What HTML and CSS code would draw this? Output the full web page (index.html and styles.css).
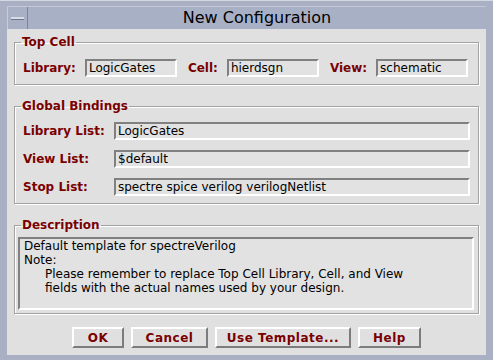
FILE: index.html
```html
<!DOCTYPE html>
<html lang="en">
<head>
  <meta charset="UTF-8">
  <title>New Configuration</title>
  <link rel="stylesheet" href="styles.css">
</head>
<body>
  <div class="window">
    <!-- Title bar -->
    <div class="titlebar">
      <div class="menu-btn"><span class="dash"></span></div>
      <div class="title">New Configuration</div>
    </div>

    <div class="content">
      <!-- Top Cell -->
      <fieldset class="group">
        <legend>Top Cell</legend>
        <div class="cell-row">
          <label class="lbl">Library:</label>
          <div class="field short">LogicGates</div>
          <label class="lbl">Cell:</label>
          <div class="field short">hierdsgn</div>
          <label class="lbl">View:</label>
          <div class="field short last">schematic</div>
        </div>
      </fieldset>

      <!-- Global Bindings -->
      <fieldset class="group">
        <legend>Global Bindings</legend>
        <div class="bind-grid">
          <label class="lbl">Library List:</label>
          <div class="field">LogicGates</div>
          <label class="lbl">View List:</label>
          <div class="field">$default</div>
          <label class="lbl">Stop List:</label>
          <div class="field">spectre spice verilog verilogNetlist</div>
        </div>
      </fieldset>

      <!-- Description -->
      <fieldset class="group desc-group">
        <legend>Description</legend>
        <div class="desc">
          <div>Default template for spectreVerilog</div>
          <div>Note:</div>
          <div class="indent">Please remember to replace Top Cell Library, Cell, and View</div>
          <div class="indent">fields with the actual names used by your design.</div>
        </div>
      </fieldset>

      <div class="buttons">
        <button class="btn btn-ok">OK</button>
        <button class="btn btn-cancel">Cancel</button>
        <button class="btn btn-template">Use Template...</button>
        <button class="btn btn-help">Help</button>
      </div>
    </div>
  </div>
</body>
</html>
```

FILE: styles.css
```css
html, body {
  margin: 0;
  padding: 0;
}
body {
  width: 493px;
  height: 360px;
  background: #a9b0c4;
  font-family: 'DejaVu Sans', sans-serif;
  overflow: hidden;
}
.window {
  box-sizing: border-box;
  height: 360px;
  padding: 5px 7px 5px 7px;
  border-top: 1px solid #d4d8e2;
  display: flex;
  flex-direction: column;
}
.titlebar {
  height: 23px;
  display: flex;
  background: #a8b0c6;
  border-top: 1px solid #c4c9d6;
  box-sizing: border-box;
}
.menu-btn {
  width: 21px;
  box-sizing: border-box;
  border-right: 1px solid #7f8699;
  border-left: 1px solid #c8ccd8;
  display: flex;
  align-items: center;
  justify-content: center;
}
.dash {
  display: block;
  width: 13px;
  height: 2px;
  background: #d8dce6;
  border-bottom: 1px solid #6f7689;
}
.title {
  flex: 1;
  text-align: center;
  font-size: 16px;
  line-height: 22px;
  color: #000;
}
.content {
  flex: 1;
  background: #e0e0e0;
  padding: 6px 7px 0 7px;
  display: flex;
  flex-direction: column;
}
.group {
  margin: 0;
  padding: 0 8px 7px 8px;
  border: 1px solid #a2a2a2;
  box-shadow: inset 1px 1px 0 #fff, 1px 1px 0 #fff;
}
.group + .group {
  margin-top: 14px;
}
legend {
  padding: 0 1px;
  margin-left: -2px;
  font-size: 12px;
  font-weight: bold;
  line-height: 14px;
  color: #7a0000;
}
.lbl {
  font-size: 12px;
  font-weight: bold;
  color: #7a0000;
  white-space: nowrap;
}
.field {
  box-sizing: border-box;
  height: 18px;
  background: #e2e2e2;
  border-top: 2px solid #808080;
  border-left: 2px solid #808080;
  border-bottom: 2px solid #fff;
  border-right: 2px solid #fff;
  padding: 0 2px;
  font-size: 12px;
  line-height: 14px;
  color: #000;
  white-space: nowrap;
  overflow: hidden;
}
.cell-row {
  display: flex;
  align-items: center;
  padding-top: 10px;
}
.cell-row .lbl {
  margin-right: 9px;
}
.field.short {
  width: 92px;
  margin-right: 11px;
}
.field.short.last {
  margin-right: 0;
}
.bind-grid {
  display: grid;
  grid-template-columns: 91px 1fr;
  row-gap: 10px;
  align-items: center;
  padding-top: 9px;
}
.desc-group {
  padding: 5px 4px 3px 3px;
}
.desc-group legend {
  margin-left: 3px;
}
.desc {
  box-sizing: border-box;
  height: 73px;
  background: #e2e2e2;
  border-top: 2px solid #808080;
  border-left: 2px solid #808080;
  border-bottom: 2px solid #fff;
  border-right: 2px solid #fff;
  padding: 0 4px;
  font-size: 12px;
  line-height: 14px;
  color: #000;
}
.indent {
  padding-left: 21px;
}
.buttons {
  display: flex;
  justify-content: center;
  gap: 7px;
  margin-top: 13px;
}
.btn {
  box-sizing: border-box;
  height: 21px;
  background: #e0e0e0;
  border-top: 2px solid #fff;
  border-left: 2px solid #fff;
  border-bottom: 2px solid #7c7c7c;
  border-right: 2px solid #7c7c7c;
  padding: 0;
  font-family: 'DejaVu Sans', sans-serif;
  font-size: 12px;
  font-weight: bold;
  letter-spacing: 0.5px;
  color: #7a0000;
  cursor: pointer;
}
.btn-ok { width: 52px; }
.btn-cancel { width: 77px; }
.btn-template { width: 136px; }
.btn-help { width: 63px; }
```
